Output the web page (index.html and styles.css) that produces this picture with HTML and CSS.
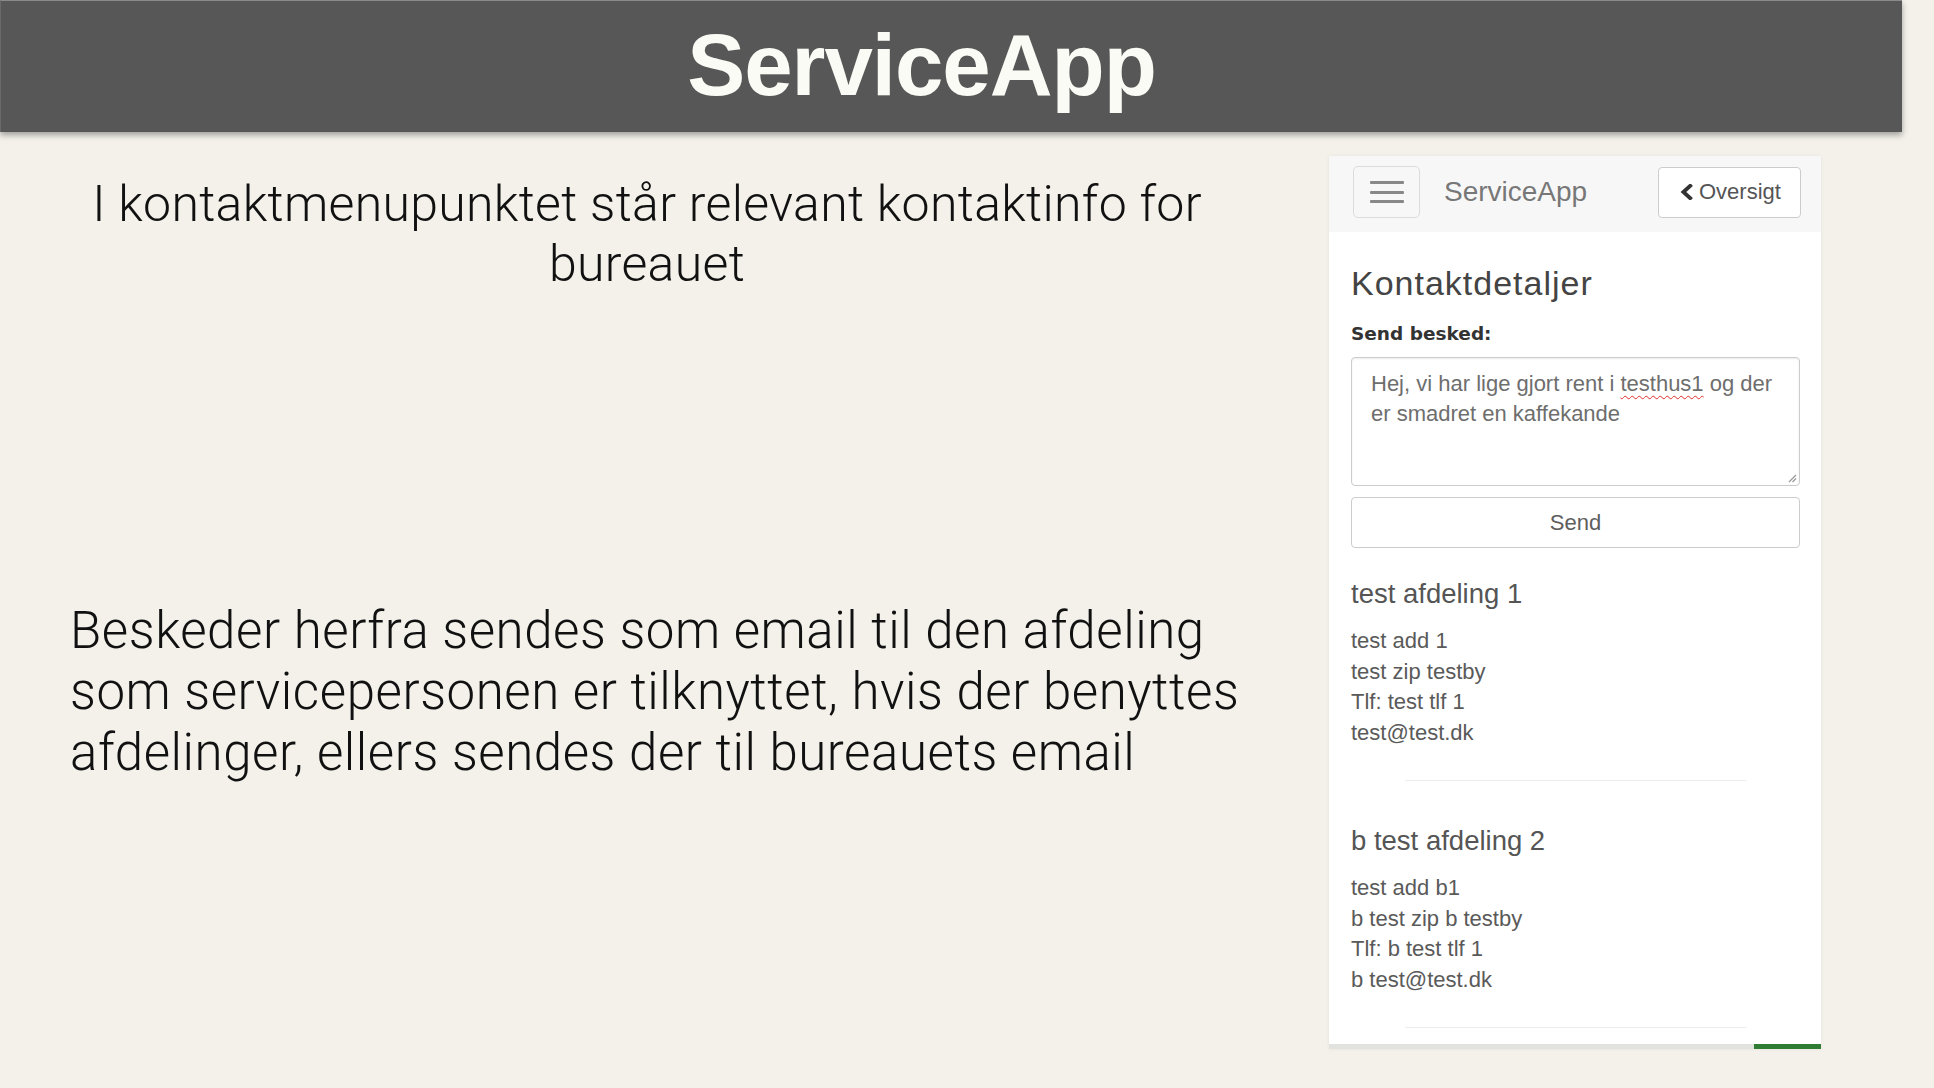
FILE: index.html
```html
<!DOCTYPE html>
<html lang="da">
<head>
<meta charset="utf-8">
<title>ServiceApp</title>
<link rel="stylesheet" href="styles.css">
</head>
<body>
<header class="topbar">
  <h1 class="title">ServiceApp</h1>
</header>
<main class="stage">
  <section class="notes">
    <p class="note note-center">I kontaktmenupunktet står relevant kontaktinfo for<br>bureauet</p>
    <p class="note note-left">Beskeder herfra sendes som email til den afdeling<br>som servicepersonen er tilknyttet, hvis der benyttes<br>afdelinger, ellers sendes der til bureauets email</p>
  </section>
  <aside class="phone">
    <nav class="navbar">
      <button class="burger" type="button" aria-label="Menu">
        <span class="burger-bar"></span>
        <span class="burger-bar"></span>
        <span class="burger-bar"></span>
      </button>
      <span class="brand">ServiceApp</span>
      <button class="back" type="button">
        <svg class="chevron" width="13" height="16" viewBox="0 0 13 16"><polyline points="10.2,1.8 3.4,8 10.2,14.2" fill="none" stroke="#333" stroke-width="3.8" stroke-linecap="square" stroke-linejoin="miter"/></svg>
        <span>Oversigt</span>
      </button>
    </nav>
    <div class="content">
      <h2 class="heading">Kontaktdetaljer</h2>
      <div class="label">Send besked:</div>
      <div class="textarea"><span>Hej, vi har lige gjort rent i </span><span class="spell">testhus1</span><span> og der er smadret en kaffekande</span><svg class="grip" width="10" height="10" viewBox="0 0 10 10"><line x1="9" y1="2" x2="2" y2="9" stroke="#999" stroke-width="1.2"/><line x1="9" y1="5.5" x2="5.5" y2="9" stroke="#999" stroke-width="1.2"/></svg></div>
      <button class="send" type="button">Send</button>

      <div class="dept dept-first">
        <h3 class="dept-name">test afdeling 1</h3>
        <p class="addr">test add 1<br>test zip testby<br>Tlf: test tlf 1<br>test@test.dk</p>
      </div>
      <hr class="sep">
      <div class="dept">
        <h3 class="dept-name">b test afdeling 2</h3>
        <p class="addr">test add b1<br>b test zip b testby<br>Tlf: b test tlf 1<br>b test@test.dk</p>
      </div>
      <hr class="sep">
    </div>
    <div class="progress"><span class="progress-fill"></span></div>
  </aside>
</main>
</body>
</html>
```
FILE: styles.css
```css
* { box-sizing: border-box; }

html, body {
  margin: 0;
  padding: 0;
}

body {
  background: #f3f1ea;
  font-family: "Liberation Sans", Arial, sans-serif;
  width: 1934px;
  height: 1088px;
  overflow: hidden;
}

.topbar {
  width: 1902px;
  height: 132px;
  background: #575757;
  border-top: 1px solid #8a8a8a;
  border-left: 1px solid #6a6a6a;
  box-shadow: 0 3px 6px rgba(0, 0, 0, 0.35);
  padding-right: 60px;
}

.title {
  margin: 0;
  text-align: center;
  color: #fbfbf6;
  font-family: "Liberation Sans", Arial, sans-serif;
  font-weight: 700;
  font-size: 87px;
  letter-spacing: -1px;
  line-height: 127px;
}

.stage {
  display: grid;
  grid-template-columns: 1329px 492px;
  align-items: start;
  padding-top: 24px;
}

.notes {
  padding: 18px 105px 0 70px;
}

.note {
  margin: 0;
  font-family: Roboto, "Liberation Sans", sans-serif;
  font-weight: 300;
  line-height: 60px;
  color: #111;
  white-space: nowrap;
}

.note-center {
  text-align: center;
  font-size: 50px;
  letter-spacing: 0.3px;
}

.note-left {
  text-align: left;
  font-size: 51px;
  line-height: 61px;
  letter-spacing: 0.55px;
  margin-top: 306px;
}

/* phone panel */
.phone {
  background: #fff;
  box-shadow: 0 0 4px rgba(0, 0, 0, 0.06);
}

.navbar {
  height: 76px;
  background: #f7f7f7;
  display: flex;
  align-items: center;
  padding: 0 20px 4px 24px;
}

.burger {
  width: 67px;
  height: 52px;
  border: 1px solid #dcdcdc;
  border-radius: 5px;
  background: transparent;
  display: flex;
  flex-direction: column;
  align-items: center;
  justify-content: center;
  gap: 6.5px;
  padding: 0;
}

.burger-bar {
  display: block;
  width: 34px;
  height: 3px;
  background: #888;
  border-radius: 1px;
}

.brand {
  margin-left: 24px;
  font-size: 28px;
  color: #777;
}

.back {
  margin-left: auto;
  width: 143px;
  height: 51px;
  border: 1px solid #ccc;
  border-radius: 4px;
  background: #fff;
  display: flex;
  align-items: center;
  gap: 6px;
  padding: 0 0 0 21px;
  font-family: "Liberation Sans", Arial, sans-serif;
  font-size: 22px;
  color: #555;
}

.chevron { flex: none; }

.content {
  padding: 33px 21px 16px 22px;
}

.heading {
  margin: 0 0 19px;
  font-weight: 400;
  font-size: 34px;
  letter-spacing: 1px;
  line-height: 37px;
  color: #444;
}

.label {
  font-family: "DejaVu Sans", Verdana, sans-serif;
  font-weight: 700;
  font-size: 18.5px;
  line-height: 26px;
  color: #333;
  margin-bottom: 10px;
}

.textarea {
  position: relative;
  height: 129px;
  border: 1px solid #ccc;
  border-radius: 4px;
  box-shadow: inset 0 1px 2px rgba(0, 0, 0, 0.08);
  padding: 11px 19px 0 19px;
  font-size: 22px;
  line-height: 30px;
  color: #6e6e6e;
}

.spell {
  text-decoration: underline wavy #e0302a;
  text-decoration-thickness: 1px;
  text-underline-offset: 4px;
}

.grip {
  position: absolute;
  right: 2px;
  bottom: 2px;
}

.send {
  display: block;
  width: 100%;
  height: 51px;
  margin-top: 11px;
  border: 1px solid #ccc;
  border-radius: 4px;
  background: #fff;
  font-family: "Liberation Sans", Arial, sans-serif;
  font-size: 22px;
  color: #5e5e5e;
}

.dept { padding-top: 45px; }
.dept-first { padding-top: 31px; }

.dept-name {
  margin: 0 0 17px;
  font-weight: 400;
  font-size: 27.5px;
  line-height: 30px;
  color: #555;
}

.addr {
  margin: 0;
  font-size: 22px;
  line-height: 30.7px;
  color: #5a5a5a;
}

.sep {
  margin: 31px 54px 0;
  border: 0;
  border-top: 1px solid #ececec;
  height: 0;
}

.progress {
  height: 5px;
  background: #e2e2de;
  display: flex;
  justify-content: flex-end;
}

.progress-fill {
  width: 67px;
  background: #2f7d33;
}
```
